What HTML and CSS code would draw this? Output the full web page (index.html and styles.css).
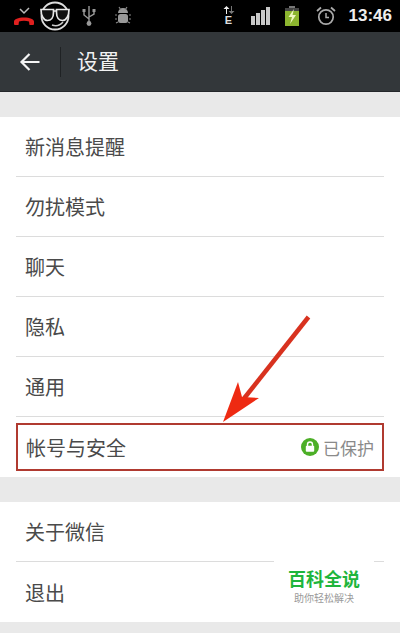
FILE: index.html
```html
<!DOCTYPE html>
<html lang="zh-CN">
<head>
  <meta charset="UTF-8" />
  <meta name="viewport" content="width=device-width, initial-scale=1.0"/>
  <title>设置</title>
  <link rel="stylesheet" href="styles.css">
</head>
<body>
  <div class="status-bar">
    <div class="status-left">
      <svg class="ic-call" width="24" height="20" viewBox="0 0 24 20">
        <path d="M8 3l4 4 5-5" fill="none" stroke="#bbb" stroke-width="1.5"/>
        <path d="M2 18v-2.500c0-2 4-4 10-4s10 2 10 4V18a1 1 0 0 1-1 1h-3.500l-.5-3.500c-3-1-7-1-10 0L6.500 19H3a1 1 0 0 1-1-1z" fill="#e0201f"/>
      </svg>
      <svg class="ic-face" width="32" height="32" viewBox="0 0 32 32">
        <circle cx="15" cy="16" r="13.500" fill="none" stroke="#ddd" stroke-width="1.800"/>
        <path d="M1 9.500h12.500v3c0 5-2.500 8-6 8-4 0-6.500-5-6.500-11zM16.500 9.500H29c0 6-2.500 11-6.500 11-3.500 0-6-3-6-8zM13.500 11h3" fill="#111" stroke="#e8e8e8" stroke-width="1.700"/>
        <path d="M12 25c4 1.500 8 .5 11-3" fill="none" stroke="#ccc" stroke-width="1.500"/>
      </svg>
      <svg class="ic-usb" width="16" height="22" viewBox="0 0 16 22">
        <path d="M8 1v17M8 14L3 10V6M8 12l5-3V6" fill="none" stroke="#999" stroke-width="1.400"/>
        <circle cx="8" cy="18.500" r="2.400" fill="#999"/>
        <rect x="1.500" y="4" width="3" height="3" fill="#999"/>
        <rect x="11.500" y="4" width="3" height="3" fill="#999"/>
      </svg>
      <svg class="ic-bug" width="18" height="20" viewBox="0 0 18 20">
        <path d="M4 7a5 5 0 0 1 10 0z" fill="#999"/>
        <rect x="4" y="8" width="10" height="9" rx="2.500" fill="#999"/>
        <path d="M5 1l2 3M13 1l-2 3M1 9h2M15 9h2M1 13h2M15 13h2M2 17l2-1M16 17l-2-1" stroke="#888" stroke-width="1.200"/>
      </svg>
    </div>
    <div class="status-right">
      <div class="net">
        <svg width="14" height="8" viewBox="0 0 14 8">
          <path d="M4 8V3H1.500L4.500 0l3 3H5v5z" fill="#eee"/>
          <path d="M10 0v5h2.500l-3 3-3-3H9V0z" fill="#777"/>
        </svg>
        <span class="net-letter">E</span>
      </div>
      <div class="signal">
        <span class="bar bar-1"></span>
        <span class="bar bar-2"></span>
        <span class="bar bar-3"></span>
        <span class="bar bar-4"></span>
      </div>
      <svg class="ic-battery" width="14" height="20" viewBox="0 0 14 20">
        <rect x="4" y="0" width="6" height="2" fill="#777"/>
        <rect x="0" y="2" width="14" height="3" fill="#444"/>
        <rect x="0" y="5" width="14" height="15" fill="#8cb52f"/>
        <path d="M9 3L3.500 11H7l-2 7 6-9H7.500z" fill="#eef7c0"/>
      </svg>
      <svg class="ic-alarm" width="20" height="20" viewBox="0 0 20 20">
        <circle cx="10" cy="11" r="7.200" fill="none" stroke="#aaa" stroke-width="1.700"/>
        <path d="M10 7v4.500h3" fill="none" stroke="#aaa" stroke-width="1.500"/>
        <path d="M1 5l4-3.500M19 5l-4-3.500" stroke="#aaa" stroke-width="1.800"/>
      </svg>
      <span class="clock">13:46</span>
    </div>
  </div>

  <div class="title-bar">
    <svg class="ic-back" width="22" height="20" viewBox="0 0 22 20">
      <path d="M20.500 10H3M10.500 2L2.500 10l8 8" fill="none" stroke="#f4f4f4" stroke-width="2.200"/>
    </svg>
    <span class="title-sep"></span>
    <span class="title-text">设置</span>
  </div>

  <ul class="group group-first">
    <li class="row"><span class="row-text">新消息提醒</span></li>
    <li class="row"><span class="row-text">勿扰模式</span></li>
    <li class="row"><span class="row-text">聊天</span></li>
    <li class="row"><span class="row-text">隐私</span></li>
    <li class="row"><span class="row-text">通用</span></li>
    <li class="row row-marked">
      <div class="marked-box">
        <span class="row-text">帐号与安全</span>
        <span class="protect">
          <svg width="18" height="18" viewBox="0 0 18 18">
            <circle cx="9" cy="9" r="9" fill="#4caf27"/>
            <path d="M6.500 8V6.500a2.500 2.500 0 0 1 5 0V8" fill="none" stroke="#fff" stroke-width="1.400"/>
            <rect x="4.800" y="7.800" width="8.400" height="6" rx="1" fill="#fff"/>
          </svg>
          <span class="protect-text">已保护</span>
        </span>
      </div>
    </li>
  </ul>

  <ul class="group">
    <li class="row"><span class="row-text">关于微信</span></li>
    <li class="row"><span class="row-text">退出</span></li>
  </ul>

  <svg class="arrow" width="115" height="116" viewBox="0 0 115 116">
    <path d="M108.500 4L42 88" stroke="#d8321f" stroke-width="4.500" fill="none"/>
    <path d="M23 109L38 69 42 84 59 85z" fill="#ee2a12"/>
  </svg>

  <div class="watermark">
    <div class="wm-title">百科全说</div>
    <div class="wm-sub">助你轻松解决</div>
  </div>
</body>
</html>
```

FILE: styles.css
```css
* {
  box-sizing: border-box;
}
html, body {
  height: 633px;
  overflow: hidden;
}
body {
  position: relative;
  margin: 0;
  background: #e9e9e9;
  font-family: "Noto Sans CJK SC", "Liberation Sans", sans-serif;
  color: #3c3c3c;
}
.status-bar {
  display: flex;
  justify-content: space-between;
  align-items: center;
  height: 32px;
  background: #000;
  padding: 0 8px 0 12px;
}
.status-left, .status-right {
  display: flex;
  align-items: center;
}
.ic-face {
  margin-left: 4px;
}
.ic-usb {
  margin-left: 9px;
}
.ic-bug {
  margin-left: 17px;
}
.net {
  display: flex;
  flex-direction: column;
  align-items: center;
  margin-right: 15px;
}
.net-letter {
  font-family: "Liberation Sans", sans-serif;
  font-size: 11px;
  line-height: 12px;
  font-weight: bold;
  color: #ddd;
}
.signal {
  display: flex;
  align-items: flex-end;
  gap: 1px;
  height: 18px;
  margin-right: 15px;
}
.bar {
  width: 4px;
  background: #c8c8c8;
}
.bar-1 { height: 9px; }
.bar-2 { height: 12px; }
.bar-3 { height: 15px; }
.bar-4 { height: 18px; }
.ic-battery {
  margin-right: 17px;
}
.ic-alarm {
  margin-right: 13px;
}
.clock {
  font-family: "Liberation Sans", sans-serif;
  font-size: 17px;
  font-weight: bold;
  color: #eee;
}
.title-bar {
  display: flex;
  align-items: center;
  height: 60px;
  background: #33373a;
  border-bottom: 1px solid #24272a;
  padding-left: 19px;
}
.title-sep {
  width: 1px;
  height: 30px;
  margin-left: 19px;
  background: #1f2224;
}
.title-text {
  margin-left: 16px;
  padding-bottom: 4px;
  font-size: 21px;
  color: #f2f2f2;
}
.group {
  list-style-type: none;
  margin: 25px 0 0;
  padding: 0;
  background: #fff;
}
.row {
  display: flex;
  align-items: center;
  height: 60px;
  margin: 0 16px;
  padding: 0 9px;
  border-bottom: 1px solid #dcdcdc;
}
.row:last-child {
  border-bottom: none;
}
.row-text {
  font-size: 20px;
  color: #4a4a4a;
}
.row-marked {
  padding: 0;
}
.marked-box {
  display: flex;
  justify-content: space-between;
  align-items: center;
  width: 100%;
  height: 48px;
  padding: 0 8px;
  border: 2px solid #b03a30;
}
.protect {
  display: flex;
  align-items: center;
  gap: 4px;
}
.protect-text {
  font-size: 17px;
  color: #8a8a8a;
}
.arrow {
  position: absolute;
  left: 200px;
  top: 313px;
}
.watermark {
  position: absolute;
  left: 274px;
  top: 561px;
  width: 100px;
  height: 46px;
  padding-top: 6px;
  background: #fff;
  text-align: center;
}
.wm-title {
  font-size: 18px;
  line-height: 22px;
  font-weight: bold;
  color: #1fb53c;
}
.wm-sub {
  margin-top: 2px;
  font-size: 10px;
  line-height: 14px;
  color: #999;
}
```
